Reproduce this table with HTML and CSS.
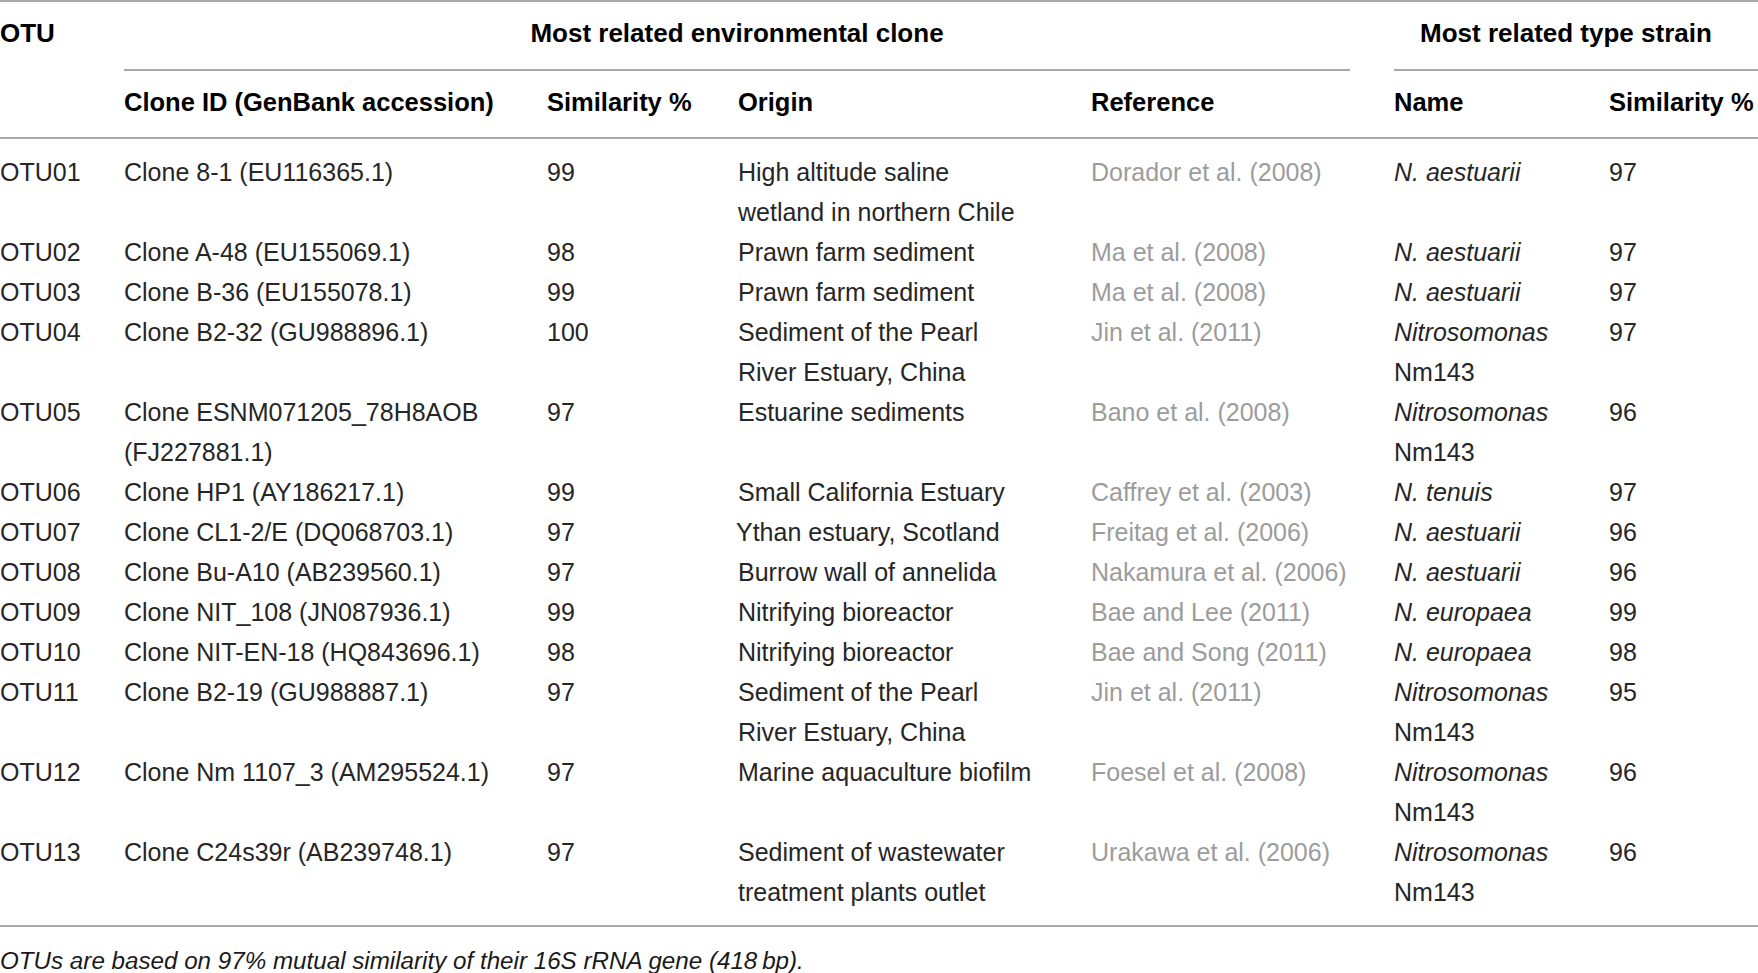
FILE: index.html
```html
<!DOCTYPE html>
<html lang="en">
<head>
<meta charset="utf-8">
<title>OTU table</title>
<link rel="stylesheet" href="styles.css">
</head>
<body>
<div class="page">
  <div class="table">
    <div class="row head-groups">
      <div class="cell hcell otu-head">OTU</div>
      <div class="cell group group-env"><span class="group-line">Most related environmental clone</span></div>
      <div class="cell group group-type"><span class="group-line">Most related type strain</span></div>
    </div>
    <div class="row head-cols">
      <div class="cell hcell"></div>
      <div class="cell hcell">Clone ID (GenBank accession)</div>
      <div class="cell hcell">Similarity %</div>
      <div class="cell hcell">Origin</div>
      <div class="cell hcell">Reference</div>
      <div class="cell hcell">Name</div>
      <div class="cell hcell">Similarity %</div>
    </div>
    <div class="tbody">
      <div class="row">
        <div class="cell">OTU01</div>
        <div class="cell">Clone 8-1 (EU116365.1)</div>
        <div class="cell">99</div>
        <div class="cell">High altitude saline<br>wetland in northern Chile</div>
        <div class="cell ref">Dorador et al. (2008)</div>
        <div class="cell"><i>N. aestuarii</i></div>
        <div class="cell">97</div>
      </div>
      <div class="row">
        <div class="cell">OTU02</div>
        <div class="cell">Clone A-48 (EU155069.1)</div>
        <div class="cell">98</div>
        <div class="cell">Prawn farm sediment</div>
        <div class="cell ref">Ma et al. (2008)</div>
        <div class="cell"><i>N. aestuarii</i></div>
        <div class="cell">97</div>
      </div>
      <div class="row">
        <div class="cell">OTU03</div>
        <div class="cell">Clone B-36 (EU155078.1)</div>
        <div class="cell">99</div>
        <div class="cell">Prawn farm sediment</div>
        <div class="cell ref">Ma et al. (2008)</div>
        <div class="cell"><i>N. aestuarii</i></div>
        <div class="cell">97</div>
      </div>
      <div class="row">
        <div class="cell">OTU04</div>
        <div class="cell">Clone B2-32 (GU988896.1)</div>
        <div class="cell">100</div>
        <div class="cell">Sediment of the Pearl<br>River Estuary, China</div>
        <div class="cell ref">Jin et al. (2011)</div>
        <div class="cell"><i>Nitrosomonas</i><br>Nm143</div>
        <div class="cell">97</div>
      </div>
      <div class="row">
        <div class="cell">OTU05</div>
        <div class="cell">Clone ESNM071205_78H8AOB<br>(FJ227881.1)</div>
        <div class="cell">97</div>
        <div class="cell">Estuarine sediments</div>
        <div class="cell ref">Bano et al. (2008)</div>
        <div class="cell"><i>Nitrosomonas</i><br>Nm143</div>
        <div class="cell">96</div>
      </div>
      <div class="row">
        <div class="cell">OTU06</div>
        <div class="cell">Clone HP1 (AY186217.1)</div>
        <div class="cell">99</div>
        <div class="cell">Small California Estuary</div>
        <div class="cell ref">Caffrey et al. (2003)</div>
        <div class="cell"><i>N. tenuis</i></div>
        <div class="cell">97</div>
      </div>
      <div class="row">
        <div class="cell">OTU07</div>
        <div class="cell">Clone CL1-2/E (DQ068703.1)</div>
        <div class="cell">97</div>
        <div class="cell"><span class="nudge">Ythan estuary, Scotland</span></div>
        <div class="cell ref">Freitag et al. (2006)</div>
        <div class="cell"><i>N. aestuarii</i></div>
        <div class="cell">96</div>
      </div>
      <div class="row">
        <div class="cell">OTU08</div>
        <div class="cell">Clone Bu-A10 (AB239560.1)</div>
        <div class="cell">97</div>
        <div class="cell">Burrow wall of annelida</div>
        <div class="cell ref">Nakamura et al. (2006)</div>
        <div class="cell"><i>N. aestuarii</i></div>
        <div class="cell">96</div>
      </div>
      <div class="row">
        <div class="cell">OTU09</div>
        <div class="cell">Clone NIT_108 (JN087936.1)</div>
        <div class="cell">99</div>
        <div class="cell">Nitrifying bioreactor</div>
        <div class="cell ref">Bae and Lee (2011)</div>
        <div class="cell"><i>N. europaea</i></div>
        <div class="cell">99</div>
      </div>
      <div class="row">
        <div class="cell">OTU10</div>
        <div class="cell">Clone NIT-EN-18 (HQ843696.1)</div>
        <div class="cell">98</div>
        <div class="cell">Nitrifying bioreactor</div>
        <div class="cell ref">Bae and Song (2011)</div>
        <div class="cell"><i>N. europaea</i></div>
        <div class="cell">98</div>
      </div>
      <div class="row">
        <div class="cell">OTU11</div>
        <div class="cell">Clone B2-19 (GU988887.1)</div>
        <div class="cell">97</div>
        <div class="cell">Sediment of the Pearl<br>River Estuary, China</div>
        <div class="cell ref">Jin et al. (2011)</div>
        <div class="cell"><i>Nitrosomonas</i><br>Nm143</div>
        <div class="cell">95</div>
      </div>
      <div class="row">
        <div class="cell">OTU12</div>
        <div class="cell">Clone Nm 1107_3 (AM295524.1)</div>
        <div class="cell">97</div>
        <div class="cell">Marine aquaculture biofilm</div>
        <div class="cell ref">Foesel et al. (2008)</div>
        <div class="cell"><i>Nitrosomonas</i><br>Nm143</div>
        <div class="cell">96</div>
      </div>
      <div class="row">
        <div class="cell">OTU13</div>
        <div class="cell">Clone C24s39r (AB239748.1)</div>
        <div class="cell">97</div>
        <div class="cell">Sediment of wastewater<br>treatment plants outlet</div>
        <div class="cell ref">Urakawa et al. (2006)</div>
        <div class="cell"><i>Nitrosomonas</i><br>Nm143</div>
        <div class="cell">96</div>
      </div>
    </div>
  </div>
  <p class="note">OTUs are based on 97% mutual similarity of their 16S rRNA gene (418&#8201;bp).</p>
</div>
</body>
</html>
```

FILE: styles.css
```css
html, body {
  margin: 0;
  padding: 0;
  background: #ffffff;
}

body {
  width: 1758px;
  height: 973px;
  overflow: hidden;
  font-family: "Liberation Sans", Arial, sans-serif;
  color: #262626;
}

.page {
  width: 1800px;
}

.table {
  border-top: 2px solid #a8a8a8;
  border-bottom: 2px solid #a8a8a8;
  font-size: 25px;
  line-height: 40px;
}

.row {
  display: grid;
  grid-template-columns: 124px 423px 191px 353px 303px 215px 1fr;
}

.cell {
  white-space: nowrap;
}

.hcell {
  font-weight: bold;
  font-size: 25.5px;
  color: #000000;
}

.head-groups {
  padding-top: 11px;
  align-items: start;
}

.otu-head {
  font-size: 26px;
}

.group {
  font-weight: bold;
  font-size: 26px;
  color: #000000;
}

.group-env {
  grid-column: 2 / 6;
  padding-right: 44px;
}

.group-type {
  grid-column: 6 / 8;
}

.group-line {
  display: block;
  padding-bottom: 16px;
  border-bottom: 2px solid #a8a8a8;
}

.group-env .group-line {
  text-align: center;
}

.group-type .group-line {
  padding-left: 26px;
}

.head-cols {
  padding-top: 11px;
  padding-bottom: 15px;
  border-bottom: 2px solid #a8a8a8;
}

.tbody {
  padding-top: 13px;
  padding-bottom: 13px;
}

.ref {
  color: #9c9c9c;
}

.nudge {
  margin-left: -2px;
}

.note {
  margin: 22px 0 0 0;
  font-style: italic;
  font-size: 24.2px;
  line-height: 24px;
  color: #1a1a1a;
}
```
